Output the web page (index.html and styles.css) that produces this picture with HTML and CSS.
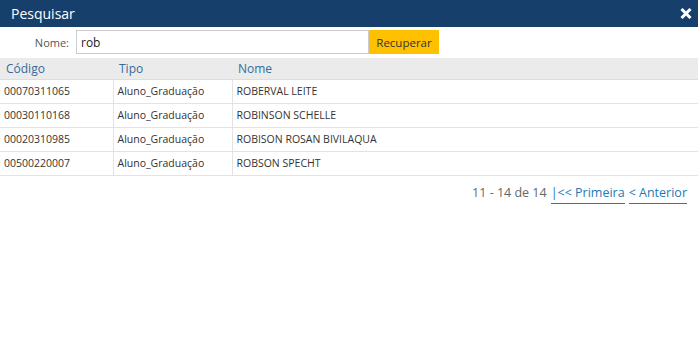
FILE: index.html
```html
<!DOCTYPE html>
<html lang="pt">
<head>
    <meta charset="UTF-8">
    <title>Pesquisar</title>
    <link rel="stylesheet" href="styles.css">
</head>
<body>

<div class="dialog">
    <div class="titlebar">
        <span class="title">Pesquisar</span>
        <svg class="close" width="12" height="11" viewBox="0 0 12 11">
            <path d="M1.5 1 L10.5 10 M10.5 1 L1.5 10" stroke="#fff" stroke-width="3"/>
        </svg>
    </div>

    <div class="search">
        <label class="lbl" for="nome">Nome:</label>
        <input id="nome" class="field" type="text" value="rob">
        <button class="btn">Recuperar</button>
    </div>

    <table class="grid">
        <thead>
            <tr>
                <th class="c1">Código</th>
                <th class="c2">Tipo</th>
                <th>Nome</th>
            </tr>
        </thead>
        <tbody>
            <tr><td>00070311065</td><td>Aluno_Graduação</td><td>ROBERVAL LEITE</td></tr>
            <tr><td>00030110168</td><td>Aluno_Graduação</td><td>ROBINSON SCHELLE</td></tr>
            <tr><td>00020310985</td><td>Aluno_Graduação</td><td>ROBISON ROSAN BIVILAQUA</td></tr>
            <tr><td>00500220007</td><td>Aluno_Graduação</td><td>ROBSON SPECHT</td></tr>
        </tbody>
    </table>

    <div class="pager">
        <span class="count">11 - 14 de 14</span>
        <a class="lnk" href="#">|&lt;&lt; Primeira</a>
        <a class="lnk" href="#">&lt; Anterior</a>
    </div>
</div>

</body>
</html>
```

FILE: styles.css
```css
body {
    margin: 0;
    background: #fff;
    font-family: "Open Sans", "Noto Sans", sans-serif;
    color: #333;
}

.dialog {
    width: 698px;
}

.titlebar {
    height: 27px;
    background-color: #163f6b;
    color: #fff;
    display: flex;
    align-items: center;
    justify-content: space-between;
    padding: 0 6px 0 11px;
}

.title {
    font-size: 14px;
}

.close {
    display: block;
}

.search {
    display: flex;
    align-items: center;
    height: 24px;
    padding-top: 3px;
    margin-bottom: 4px;
}

.lbl {
    width: 69px;
    text-align: right;
    font-size: 11px;
    color: #555;
    margin-right: 7px;
}

.field {
    box-sizing: border-box;
    width: 293px;
    height: 24px;
    border: 1px solid #ccc;
    padding: 0 4px;
    font-family: inherit;
    font-size: 12px;
    color: #222;
    outline: none;
}

.btn {
    height: 24px;
    width: 70px;
    border: none;
    background-color: #ffc000;
    color: #333;
    font-family: inherit;
    font-size: 11.5px;
    padding: 0;
}

/* tabela de resultados */
.grid {
    width: 100%;
    border-collapse: collapse;
}

.grid th {
    background-color: #ebebeb;
    color: #336c9c;
    font-weight: normal;
    font-size: 12px;
    text-align: left;
    height: 21px;
    padding: 0 6px;
    border-bottom: 1px solid #ddd;
}

.grid .c1 { width: 101px; }
.grid .c2 { width: 107px; }

.grid td {
    font-size: 10.5px;
    height: 22px;
    padding: 0 4px 1px;
    border-bottom: 1px solid #e3e3e3;
    border-left: 1px solid #e3e3e3;
}

.grid td:first-child {
    border-left: none;
}

.pager {
    display: flex;
    justify-content: flex-end;
    align-items: baseline;
    gap: 4px;
    padding: 8px 11px 0 0;
    font-size: 12.5px;
}

.count {
    color: #666;
}

.lnk {
    color: #1b7ab6;
    text-decoration: none;
    border-bottom: 1px solid #1b7ab6;
    padding-bottom: 2px;
}
```
